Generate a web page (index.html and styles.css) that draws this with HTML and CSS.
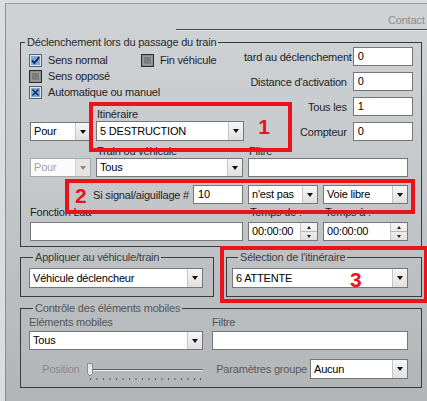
FILE: index.html
```html
<!DOCTYPE html>
<html lang="fr">
<head>
<meta charset="utf-8">
<title>Contact</title>
<link rel="stylesheet" href="styles.css">
</head>
<body>
<div class="window">
  <div class="header"><span class="tab-title">Contact</span></div>

  <fieldset class="group main">
    <legend>Déclenchement lors du passage du train</legend>
    <div class="upper">
      <div class="upper-left">
        <div class="checks">
          <div class="check-row">
            <label class="check first">
              <svg width="13" height="13" viewBox="0 0 13 13"><rect x="0.5" y="0.5" width="12" height="12" fill="#dfe6ee" stroke="#4d647d"/><rect x="2" y="2" width="9" height="9" fill="#7fa9d9"/><path d="M3 6.3 L5.4 9 L10.2 3.2" stroke="#0d2c66" stroke-width="1.9" fill="none"/></svg>
              <span>Sens normal</span>
            </label>
            <label class="check">
              <svg width="13" height="13" viewBox="0 0 13 13"><rect x="0.5" y="0.5" width="12" height="12" fill="#8c8c8c" stroke="#2e2e2e"/><rect x="2.5" y="2.5" width="8" height="8" fill="#7d7d7d" stroke="#9a9a9a"/></svg>
              <span>Fin véhicule</span>
            </label>
          </div>
          <div class="check-row">
            <label class="check">
              <svg width="13" height="13" viewBox="0 0 13 13"><rect x="0.5" y="0.5" width="12" height="12" fill="#8c8c8c" stroke="#2e2e2e"/><rect x="2.5" y="2.5" width="8" height="8" fill="#7d7d7d" stroke="#9a9a9a"/></svg>
              <span>Sens opposé</span>
            </label>
          </div>
          <div class="check-row">
            <label class="check">
              <svg width="13" height="13" viewBox="0 0 13 13"><rect x="0.5" y="0.5" width="12" height="12" fill="#dfe6ee" stroke="#4d647d"/><rect x="2" y="2" width="9" height="9" fill="#7fa9d9"/><path d="M3.5 3.5 L9.5 9.5 M9.5 3.5 L3.5 9.5" stroke="#0d2c66" stroke-width="1.6" fill="none"/></svg>
              <span>Automatique ou manuel</span>
            </label>
          </div>
        </div>
        <div class="pour-row">
          <div class="combo pour"><span class="combo-text">Pour</span><span class="combo-btn"></span></div>
          <div class="field itin">
            <span class="lbl">Itinéraire</span>
            <div class="combo h20"><span class="combo-text">5 DESTRUCTION</span><span class="combo-btn"></span></div>
          </div>
        </div>
      </div>
      <div class="upper-right">
        <div class="r-row"><span class="lbl first-r">tard au déclenchement</span><div class="input small">0</div></div>
        <div class="r-row"><span class="lbl">Distance d'activation</span><div class="input small">0</div></div>
        <div class="r-row"><span class="lbl">Tous les</span><div class="input small">1</div></div>
        <div class="r-row"><span class="lbl">Compteur</span><div class="input small">0</div></div>
      </div>
    </div>

    <div class="lower">
      <div class="combo disabled cell-pour"><span class="combo-text">Pour</span><span class="combo-btn"></span></div>
      <div class="field cell-train">
        <span class="lbl">Train ou véhicule</span>
        <div class="combo"><span class="combo-text">Tous</span><span class="combo-btn"></span></div>
      </div>
      <div class="field cell-filtre">
        <span class="lbl">Filtre</span>
        <div class="input"></div>
      </div>

      <div class="sig">
        <span class="lbl">Si signal/aiguillage #</span>
        <div class="input sig-input">10</div>
      </div>
      <div class="combo cell-c3"><span class="combo-text">n'est pas</span><span class="combo-btn"></span></div>
      <div class="combo cell-c4"><span class="combo-text">Voie libre</span><span class="combo-btn"></span></div>

      <div class="field cell-lua">
        <span class="lbl">Fonction Lua</span>
        <div class="input"></div>
      </div>
      <div class="field cell-c3 spin-field">
        <span class="lbl">Temps de :</span>
        <div class="spin"><span class="spin-text">00:00:00</span><span class="spin-btns"><i class="up"></i><i class="dn"></i></span></div>
      </div>
      <div class="field cell-c4 spin-field">
        <span class="lbl">Temps à :</span>
        <div class="spin"><span class="spin-text">00:00:00</span><span class="spin-btns"><i class="up"></i><i class="dn"></i></span></div>
      </div>
    </div>
  </fieldset>

  <div class="mid">
    <fieldset class="group g2">
      <legend>Appliquer au véhicule/train</legend>
      <div class="combo h20"><span class="combo-text">Véhicule déclencheur</span><span class="combo-btn"></span></div>
    </fieldset>
    <fieldset class="group g3">
      <legend>Sélection de l'itinéraire</legend>
      <div class="combo h20"><span class="combo-text">6 ATTENTE</span><span class="combo-btn"></span></div>
    </fieldset>
  </div>

  <fieldset class="group g4">
    <legend>Contrôle des éléments mobiles</legend>
    <div class="g4-grid">
      <div class="field">
        <span class="lbl">Eléments mobiles</span>
        <div class="combo"><span class="combo-text">Tous</span><span class="combo-btn"></span></div>
      </div>
      <div class="field">
        <span class="lbl">Filtre</span>
        <div class="input"></div>
      </div>
      <div class="pos-row">
        <span class="lbl pos-lbl">Position</span>
        <svg class="slider" width="120" height="21" viewBox="0 0 120 21">
          <line x1="5" y1="9.5" x2="120" y2="9.5" stroke="#5e5e5e"/>
          <line x1="5" y1="10.5" x2="120" y2="10.5" stroke="#eeeeee"/>
          <path d="M4.5 3.5 H9.5 V13.5 L7 16 L4.5 13.5 Z" fill="#e6e6e6" stroke="#8a8a8a"/>
          <g fill="#5a5a5a">
            <rect x="7" y="18" width="1" height="2"/><rect x="13.5" y="18" width="1" height="2"/><rect x="20" y="18" width="1" height="2"/><rect x="26.5" y="18" width="1" height="2"/><rect x="33" y="18" width="1" height="2"/><rect x="39.5" y="18" width="1" height="2"/><rect x="46" y="18" width="1" height="2"/><rect x="52.5" y="18" width="1" height="2"/><rect x="59" y="18" width="1" height="2"/><rect x="65.5" y="18" width="1" height="2"/><rect x="72" y="18" width="1" height="2"/><rect x="78.5" y="18" width="1" height="2"/><rect x="85" y="18" width="1" height="2"/><rect x="91.5" y="18" width="1" height="2"/><rect x="98" y="18" width="1" height="2"/><rect x="104.5" y="18" width="1" height="2"/><rect x="111" y="18" width="1" height="2"/><rect x="117" y="18" width="1" height="2"/>
          </g>
        </svg>
      </div>
      <div class="grp-row">
        <span class="lbl">Paramètres groupe</span>
        <div class="combo h20 aucun"><span class="combo-text">Aucun</span><span class="combo-btn"></span></div>
      </div>
    </div>
  </fieldset>
</div>

<div class="mark m1"><span>1</span></div>
<div class="mark m2"><span>2</span></div>
<div class="mark m3"><span>3</span></div>
</body>
</html>
```
FILE: styles.css
```css
* { box-sizing: border-box; }
html, body { margin: 0; padding: 0; }
body {
  width: 427px;
  height: 401px;
  overflow: hidden;
  position: relative;
  background: #dadde0;
  font-family: "Liberation Sans", Arial, sans-serif;
  font-size: 11px;
  letter-spacing: -0.2px;
  color: #1e1e1e;
}
.window {
  margin: 3px 0 0 5px;
  height: 398px;
  border-top: 1px solid #9a9da0;
  border-left: 1px solid #8c8f92;
  background: linear-gradient(180deg, #d0d3d6 0%, #c5c8cb 45%, #b2b5b8 100%);
}
.header {
  margin-left: 170px;
  height: 26px;
  border-bottom: 1px solid #4a4a4a;
  box-shadow: 0 1px 0 #e2e4e6;
  padding: 9px 0 0 212px;
  white-space: nowrap;
  overflow: hidden;
  line-height: 14px;
}
.tab-title { color: #8a8c8e; }

fieldset.group {
  margin: 0;
  padding: 0;
  min-width: 0;
  border: 1px solid #3a3a3a;
}
fieldset.group legend {
  padding: 0 2px;
  margin-left: 4px;
  line-height: 14px;
  color: #2a2a2a;
}
.main {
  margin: 5px 0 0 14px !important;
  width: 402px;
}
.lbl { line-height: 14px; white-space: nowrap; }

/* upper part */
.upper { display: flex; margin-top: -2px; }
.upper-left { padding: 5px 0 0 8px; }
.check-row { display: flex; align-items: center; height: 16px; }
.check { display: flex; align-items: center; gap: 6px; white-space: nowrap; }
.check svg { display: block; flex: none; }
.check.first { width: 112px; }
.pour-row { display: flex; align-items: flex-end; gap: 5px; margin-top: 7px; padding-left: 1px; }
.pour { width: 61px; height: 20px; }
.field { display: flex; flex-direction: column; }
.itin { width: 148px; }
.itin .lbl { padding-left: 1px; }
.upper-right {
  margin-left: auto;
  margin-right: 11px;
  display: flex;
  flex-direction: column;
  align-items: flex-end;
  gap: 6px;
}
.r-row { display: flex; align-items: center; gap: 6px; }
.first-r { margin-right: -5px; }

/* controls */
.input {
  height: 19px;
  border: 1px solid #767676;
  background: #fff;
  color: #000;
  padding-left: 4px;
  line-height: 17px;
  white-space: nowrap;
}
.input.small { width: 60px; }
.combo {
  display: flex;
  height: 19px;
  border: 1px solid #767676;
  background: #fff;
  color: #000;
}
.combo.h20 { height: 20px; }
.combo-text {
  flex: 1;
  padding-left: 3px;
  line-height: 17px;
  white-space: nowrap;
  overflow: hidden;
}
.combo.h20 .combo-text { line-height: 18px; }
.combo-btn {
  flex: none;
  width: 15px;
  border-left: 1px solid #c4c4c4;
  background: linear-gradient(180deg, #f6f6f6, #e0e0e0);
  display: flex;
  align-items: center;
  justify-content: center;
}
.combo-btn::after {
  content: "";
  border-left: 3.5px solid transparent;
  border-right: 3.5px solid transparent;
  border-top: 4px solid #111;
}
.combo.disabled { border-color: #a9a9a9; background: #fbfbfb; }
.combo.disabled .combo-text { color: #a2a2a2; }
.combo.disabled .combo-btn { background: #e4e4e4; border-left-color: #d0d0d0; }
.combo.disabled .combo-btn::after { border-top-color: #8a8a8a; }

.spin {
  display: flex;
  height: 19px;
  border: 1px solid #767676;
  background: #fff;
  color: #000;
}
.spin-text { flex: 1; padding-left: 3px; line-height: 17px; white-space: nowrap; }
.spin-btns {
  flex: none;
  width: 17px;
  display: flex;
  flex-direction: column;
  border-left: 1px solid #c4c4c4;
  background: linear-gradient(180deg, #f6f6f6, #e2e2e2);
}
.spin-btns i {
  flex: 1;
  display: flex;
  align-items: center;
  justify-content: center;
}
.spin-btns i.dn { border-top: 1px solid #b8b8b8; }
.spin-btns i.up::after {
  content: "";
  border-left: 2.5px solid transparent;
  border-right: 2.5px solid transparent;
  border-bottom: 3px solid #222;
}
.spin-btns i.dn::after {
  content: "";
  border-left: 2.5px solid transparent;
  border-right: 2.5px solid transparent;
  border-top: 3px solid #222;
}

/* lower grid */
.lower {
  display: grid;
  grid-template-columns: 61px 147px 70px 85px;
  grid-template-rows: 33px 27px 37px;
  column-gap: 5px;
  align-items: end;
  padding: 3px 0 5px 9px;
}
.cell-pour { grid-column: 1; grid-row: 1; }
.cell-train { grid-column: 2; grid-row: 1; }
.cell-train .lbl, .cell-filtre .lbl { padding-left: 1px; }
.cell-filtre { grid-column: 3 / 5; grid-row: 1; }
.sig {
  grid-column: 1 / 3;
  grid-row: 2;
  display: flex;
  justify-content: flex-end;
  align-items: center;
  gap: 4px;
}
.sig-input { width: 50px; }
.lower > .cell-c3 { grid-column: 3; }
.lower > .cell-c4 { grid-column: 4; }
.lower > .combo.cell-c3, .lower > .combo.cell-c4 { grid-row: 2; }
.cell-lua { grid-column: 1 / 3; grid-row: 3; }
.spin-field { grid-row: 3; }
.cell-lua .input, .spin-field .spin { margin-top: 3px; }
.cell-lua .lbl, .spin-field .lbl { padding-top: 1px; }
.spin-field .lbl { padding-left: 2px; }

/* middle groups */
.mid { display: flex; gap: 12px; margin: 3px 0 0 14px; }
.g2 { width: 194px; padding: 4px 10px 8px 8px !important; }
.g3 { width: 196px; padding: 4px 13px 8px 5px !important; }
.g3 legend { margin-left: 6px !important; }
.g2 legend, .g3 legend { color: #3c3c3c !important; }

/* bottom group */
.g4 {
  margin: 4px 0 0 14px !important;
  width: 402px;
  padding: 0 13px 8px 8px !important;
}
.g4 legend { color: #555 !important; }
.g4-grid {
  display: grid;
  grid-template-columns: 174px 196px;
  column-gap: 9px;
  row-gap: 9px;
}
.g4-grid .field .lbl { color: #555; }
.g4-grid .field .combo, .g4-grid .field .input { margin-top: 2px; }
.pos-row { display: flex; align-items: center; height: 20px; }
.pos-lbl { padding-left: 13px; color: #8a8a8a; }
.slider { display: block; margin-left: auto; margin-top: 3px; }
.grp-row { display: flex; align-items: center; justify-content: flex-end; gap: 3px; }
.grp-row .lbl { color: #5a5a5a; }
.aucun { width: 98px; }

/* red annotations */
.mark {
  position: absolute;
  border: 4px solid #e8131b;
  color: #e8131b;
  font-family: "Liberation Sans", Arial, sans-serif;
  font-weight: bold;
  font-size: 21px;
  line-height: 16px;
  letter-spacing: 0;
  display: flex;
}
.m1 { left: 89px; top: 102px; width: 203px; height: 50px; align-items: center; justify-content: flex-end; padding-right: 18px; }
.m2 { left: 65px; top: 179px; width: 350px; height: 35px; align-items: flex-start; padding: 5px 0 0 6px; }
.m3 { left: 220px; top: 246px; width: 208px; height: 57px; align-items: flex-start; padding: 22px 0 0 126px; }
```
